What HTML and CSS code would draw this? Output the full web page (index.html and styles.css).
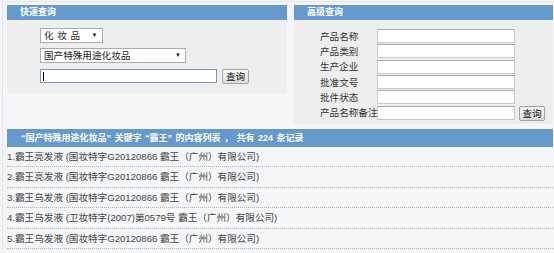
FILE: index.html
```html
<!DOCTYPE html>
<html lang="zh-CN">
<head>
<meta charset="utf-8">
<title>化妆品查询</title>
<link rel="stylesheet" href="styles.css">
</head>
<body>
<div class="page">
  <div class="top">
    <section class="panel quick">
      <div class="phead">快速查询</div>
      <div class="pbody">
        <div class="sel sel1"><span>化 妆 品</span><i class="arr">▼</i></div>
        <div class="sel sel2"><span>国产特殊用途化妆品</span><i class="arr">▼</i></div>
        <div class="searchrow">
          <div class="txt focus"><span class="caret"></span></div>
          <button class="btn">查询</button>
        </div>
      </div>
    </section>
    <section class="panel adv">
      <div class="phead">高级查询</div>
      <div class="pbody">
        <div class="form">
          <label>产品名称</label><div class="txt"></div><span></span>
          <label>产品类别</label><div class="txt"></div><span></span>
          <label>生产企业</label><div class="txt"></div><span></span>
          <label>批准文号</label><div class="txt"></div><span></span>
          <label>批件状态</label><div class="txt"></div><span></span>
          <label>产品名称备注</label><div class="txt"></div><button class="btn">查询</button>
        </div>
      </div>
    </section>
  </div>
  <div class="rhead">“国产特殊用途化妆品” 关键字 “霸王” 的内容列表 ， 共有 224 条记录</div>
  <ul class="list">
    <li>1.霸王亮发液 (国妆特字G20120866 霸王（广州）有限公司)</li>
    <li>2.霸王亮发液 (国妆特字G20120866 霸王（广州）有限公司)</li>
    <li>3.霸王乌发液 (国妆特字G20120866 霸王（广州）有限公司)</li>
    <li>4.霸王乌发液 (卫妆特字(2007)第0579号 霸王（广州）有限公司)</li>
    <li>5.霸王乌发液 (国妆特字G20120866 霸王（广州）有限公司)</li>
  </ul>
</div>
</body>
</html>
```

FILE: styles.css
```css
* { box-sizing: border-box; }
html, body { margin: 0; padding: 0; }
body {
  background: #f5f6f8;
  font-family: "Liberation Sans", "Noto Sans CJK SC", sans-serif;
  font-size: 9.6px;
  color: #333;
  width: 554px;
  height: 253px;
  overflow: hidden;
}
.page {
  margin: 1px 1px 0 2px;
  border-top: 1px solid #e2e4e7;
  border-left: 1px solid #e2e4e7;
  padding: 3px 0 0 4px;
}
.top {
  display: flex;
  gap: 7px;
  align-items: flex-start;
}
.panel.quick { width: 280px; }
.panel.adv { width: 259px; }
.phead {
  height: 15px;
  line-height: 15px;
  background: #6699cc;
  color: #fff;
  font-weight: bold;
  font-size: 9px;
  padding-left: 13px;
}
.pbody { background: #eeeeee; }
.quick .pbody {
  height: 73px;
  padding: 8px 0 0 33px;
}
.sel {
  position: relative;
  height: 15px;
  background: #fff;
  border: 1px solid #a9adb3;
  line-height: 13px;
  padding-left: 3px;
  color: #222;
}
.sel1 { width: 63px; margin-bottom: 5px; letter-spacing: 0.5px; }
.sel2 { width: 146px; margin-bottom: 6px; }
.arr {
  position: absolute;
  right: 4px;
  top: 0;
  font-style: normal;
  font-size: 6px;
  line-height: 13px;
  color: #111;
}
.searchrow { display: flex; align-items: flex-start; gap: 5px; }
.txt {
  height: 14px;
  background: #fff;
  border: 1px solid #c9c9c9;
  border-top-color: #a8a8a8;
}
.txt.focus {
  width: 177px;
  border-color: #7f9db9;
  position: relative;
}
.caret {
  position: absolute;
  left: 2px;
  top: 2px;
  width: 1px;
  height: 9px;
  background: #000;
}
.btn {
  height: 15px;
  padding: 0;
  font-family: inherit;
  font-size: 9.6px;
  line-height: 13px;
  color: #111;
  background: linear-gradient(#f7f7f7, #dcdcdc);
  border: 1px solid #a3a3a3;
  border-radius: 2px;
}
.quick .btn { width: 27px; }
.adv .pbody {
  height: 104px;
  padding: 9px 0 0 26px;
}
.form {
  display: grid;
  grid-template-columns: 57px 138px 30px;
  grid-template-rows: repeat(5, 15.3px) 16px;
  align-items: center;
}
.form label { color: #333; white-space: nowrap; line-height: 14px; }
.form .txt { align-self: start; }
.form .txt:last-of-type { align-self: center; }
.form .btn { width: 26px; margin-left: 4px; }
.rhead {
  margin-top: 5px;
  height: 18px;
  line-height: 18px;
  background: #6699cc;
  color: #fff;
  font-weight: bold;
  font-size: 9px;
  padding-left: 14px;
  white-space: nowrap;
  word-spacing: 1px;
}
.list {
  list-style: none;
  margin: 0;
  padding: 0;
}
.list li {
  height: 20.4px;
  line-height: 20px;
  border-bottom: 1px dotted #b0b0b0;
  color: #444;
  white-space: nowrap;
}
```
